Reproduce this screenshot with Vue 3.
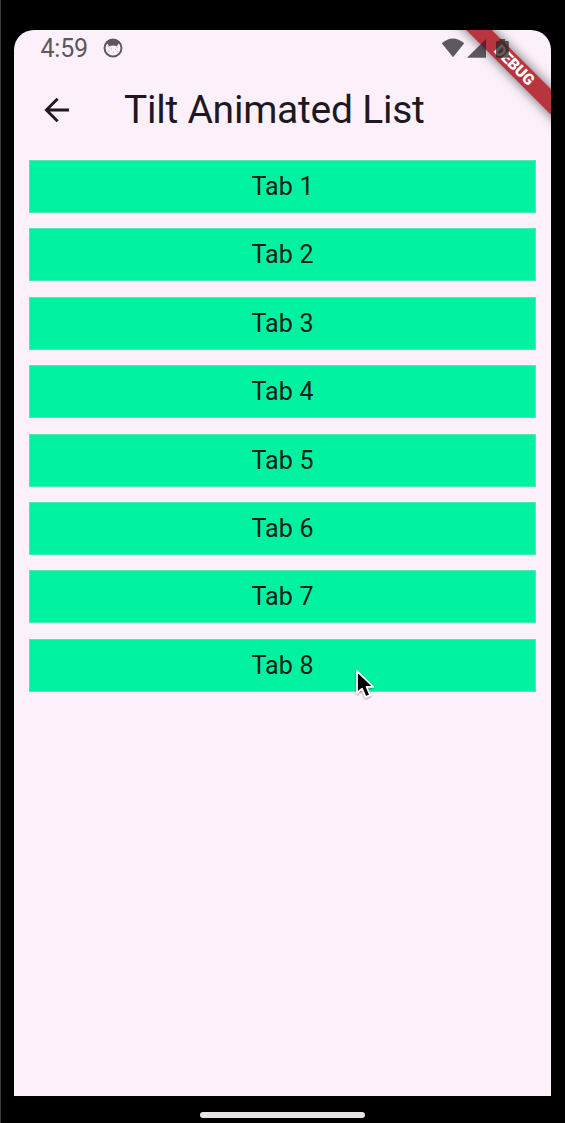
<script setup>
const tabs = Array.from({ length: 8 }, (_, i) => `Tab ${i + 1}`)
</script>

<template>
  <div class="device">
    <main class="screen">
      <header class="status">
        <span class="time">4:59</span>
        <svg class="face" width="20" height="20" viewBox="0 0 20 20">
          <circle cx="10" cy="10" r="8.5" fill="none" stroke="#5d575f" stroke-width="1.9" />
          <path d="M2.6 6.8C4 3.2 7 1.3 10 1.3s6 1.9 7.4 5.5L15.6 5.4 14 8.2Q10 6.6 6 8.2L4.4 5.4Z" fill="#5d575f" />
          <path d="M4.9 8.8h1M13.7 9.2h1M8 11h.9M12 11.3h.9M5.6 13h.9M10 14.2h1M13.8 13.6h.8" stroke="#a29ba3" stroke-width="1" />
        </svg>
      </header>
      <nav class="bar">
        <svg class="back" width="26" height="26" viewBox="0 0 26 26">
          <path d="M25 13H3M13.6 1.8L2.4 13l11.2 11.2" fill="none" stroke="#1d1920" stroke-width="2.9" />
        </svg>
        <h1>Tilt Animated List</h1>
      </nav>
      <ul class="list">
        <li v-for="tab in tabs" :key="tab"><span>{{ tab }}</span></li>
      </ul>
      <div class="ribbon"><span>DEBUG</span></div>
      <svg class="signals" width="72" height="22" viewBox="0 0 72 22">
        <path d="M.8 5.2Q12 -4.2 23.2 5.2L12 19.3Z" fill="#5d575f" />
        <path d="M26 19.8L45 1v18.8Z" fill="#282529" fill-opacity=".74" />
        <path d="M58.6 1h5.6v2.1h2.6q1 0 1 1v14.7q0 1-1 1H56q-1 0-1-1V4.1q0-1 1-1h2.6Z" fill="#252426" fill-opacity=".74" />
      </svg>
    </main>
    <div class="home"></div>
    <svg class="cursor" width="26" height="34" viewBox="0 0 26 34">
      <path d="M3 2v22.2l5-4.6 3.6 8.5 4.6-2-3.6-8.2h6.8Z" fill="#000" stroke="#fff" stroke-width="1.8" stroke-linejoin="round" />
    </svg>
  </div>
</template>

<style>
body { margin: 0; background: #000; }
</style>

<style scoped>
.device {
  position: relative;
  box-sizing: border-box;
  width: 565px;
  height: 1123px;
  padding: 29.5px 14px 0 13px;
  background: #000;
  border-left: 1px solid #3b3b41;
  overflow: hidden;
  font-family: Roboto, sans-serif;
  color: #1d1920;
}
.screen {
  position: relative;
  height: 1066.5px;
  background: #fcf0fb;
  border-radius: 20px 20px 0 0;
  overflow: hidden;
}
.status {
  display: flex;
  align-items: center;
  height: 38px;
  padding-left: 26.5px;
}
.time {
  width: 62.5px;
  font-size: 25px;
  line-height: 38px;
  letter-spacing: -.2px;
  color: #5d575f;
}
.face { margin-bottom: 1px; }
.bar {
  display: flex;
  align-items: center;
  height: 84px;
  padding: 0 0 0 29.5px;
  box-sizing: border-box;
}
h1 {
  margin: 1px 0 0 54.5px;
  font-size: 39px;
  line-height: 46px;
  font-weight: 400;
  letter-spacing: -.25px;
  white-space: nowrap;
}
.list {
  display: grid;
  gap: 15.4px;
  margin: 8.5px 15px 0;
  padding: 0;
  list-style: none;
}
li {
  display: flex;
  align-items: center;
  justify-content: center;
  box-sizing: border-box;
  height: 53px;
  background: #00f2a0;
  border: 1px solid #50e9b4;
  font-size: 25px;
  letter-spacing: .15px;
  color: #0b2018;
}
.ribbon {
  position: absolute;
  left: 400.5px;
  top: 27px;
  width: 200px;
  height: 18px;
  background: #b8353e;
  box-shadow: 0 0 12px rgba(0, 0, 0, .6);
  transform: rotate(45deg);
  text-align: center;
  color: #fff;
  font-size: 15.5px;
  font-weight: 900;
  line-height: 18px;
}
.ribbon span {
  position: relative;
  left: -1px;
}
.signals { position: absolute; left: 427px; top: 8px; }
.home {
  width: 165px;
  height: 6px;
  margin: 16px auto 0;
  border-radius: 3px;
  background: #e7e3e6;
}
.cursor {
  position: absolute;
  left: 353px;
  top: 669px;
  filter: drop-shadow(0 1px 1px rgba(0, 0, 0, .35));
}
</style>
